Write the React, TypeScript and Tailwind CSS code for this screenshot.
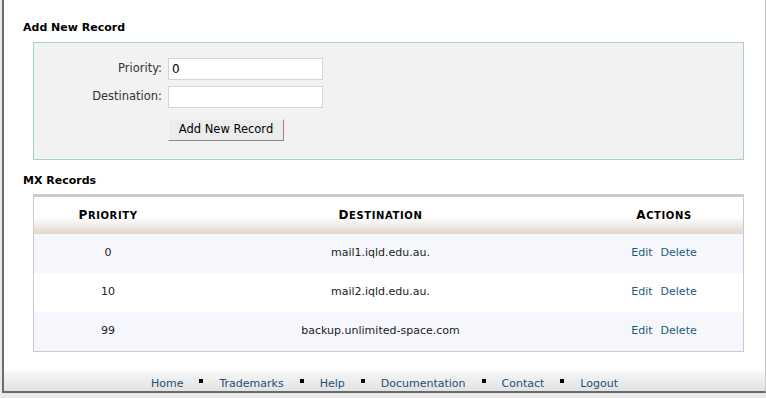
import React from "react"

const records = [
  { priority: "0", destination: "mail1.iqld.edu.au." },
  { priority: "10", destination: "mail2.iqld.edu.au." },
  { priority: "99", destination: "backup.unlimited-space.com" },
]

const links = ["Home", "Trademarks", "Help", "Documentation", "Contact", "Logout"]

export default function App() {
  return (
    <div
      className="w-[766px] h-[398px] overflow-hidden bg-[#e9e9e9] text-[11px] text-[#222]"
      style={{ fontFamily: '"DejaVu Sans", Verdana, sans-serif' }}
    >
      <div className="ml-[2px] w-[764px] h-[393px] flex flex-col bg-white border-l-2 border-[#6b6b6b] border-r border-r-[#c8c8c8] border-b-2 border-b-[#6b6b6b]">
        <div className="flex-1 pl-[19px] pr-[19px]">
          {/* Add New Record */}
          <h2 className="mt-[21px] font-bold text-[11px] text-black leading-[14px]">Add New Record</h2>
          <div className="mt-[7px] ml-[10px] w-[711px] h-[118px] border border-[#a9d3b7] bg-[#f2f2f2] pt-[15px]">
            <div className="flex items-center h-[22px]">
              <label className="w-[134px] text-right pr-[6px] text-[11.5px] text-[#333]">Priority:</label>
              <input
                defaultValue="0"
                className="w-[155px] h-[22px] bg-white border border-[#d4d4d4] px-[3px] text-[12px] text-black outline-none"
                style={{ fontFamily: "inherit" }}
              />
            </div>
            <div className="flex items-center h-[22px] mt-[6px]">
              <label className="w-[134px] text-right pr-[6px] text-[11.5px] text-[#333]">Destination:</label>
              <input
                className="w-[155px] h-[22px] bg-white border border-[#d4d4d4] px-[3px] text-[12px] outline-none"
                style={{ fontFamily: "inherit" }}
              />
            </div>
            <div className="mt-[11px] pl-[134px]">
              <button
                className="w-[116px] h-[22px] bg-[#ececec] border border-t-[#f5f5f5] border-l-[#f5f5f5] border-r-[#8a8a8a] border-b-[#8a8a8a] text-[11.5px] text-black"
                style={{ fontFamily: "inherit" }}
              >
                Add New Record
              </button>
            </div>
          </div>

          {/* MX Records */}
          <h2 className="mt-[14px] font-bold text-[11px] text-black leading-[14px]">MX Records</h2>
          <div className="mt-[6px] ml-[10px] w-[711px] border border-[#cbcbcb] border-t-[3px]">
            <div className="flex items-center h-[37px] bg-gradient-to-b from-white from-55% to-[#e2d6cf] font-bold text-black">
              <div className="w-[148px] text-center tracking-[0.6px]">
                <span className="text-[12px]">P</span>
                <span className="text-[10px]">RIORITY</span>
              </div>
              <div className="flex-1 text-center tracking-[0.6px] pr-[6px]">
                <span className="text-[12px]">D</span>
                <span className="text-[10px]">ESTINATION</span>
              </div>
              <div className="w-[158px] text-center tracking-[0.6px]">
                <span className="text-[12px]">A</span>
                <span className="text-[10px]">CTIONS</span>
              </div>
            </div>
            {records.map((r, i) => (
              <div
                key={r.priority}
                className={`flex items-center h-[39px] ${i % 2 === 0 ? "bg-[#f6f7fc]" : "bg-white"}`}
              >
                <div className="w-[148px] text-center">{r.priority}</div>
                <div className="flex-1 text-center pr-[6px]">{r.destination}</div>
                <div className="w-[158px] text-center text-[#1d5a78]">
                  <span>Edit</span>
                  <span className="ml-[8px]">Delete</span>
                </div>
              </div>
            ))}
          </div>
        </div>

        {/* Footer */}
        <div className="h-[20px] bg-gradient-to-b from-[#f7f7f7] to-[#e2e2e2] flex items-end justify-center text-[11px] leading-[14px] text-[#1d4f7a]">
          {links.map((l, i) => (
            <React.Fragment key={l}>
              {i > 0 && <span className="mx-[16px] w-[4px] h-[4px] bg-black inline-block mb-[8px]" />}
              <span>{l}</span>
            </React.Fragment>
          ))}
        </div>
      </div>
    </div>
  )
}
